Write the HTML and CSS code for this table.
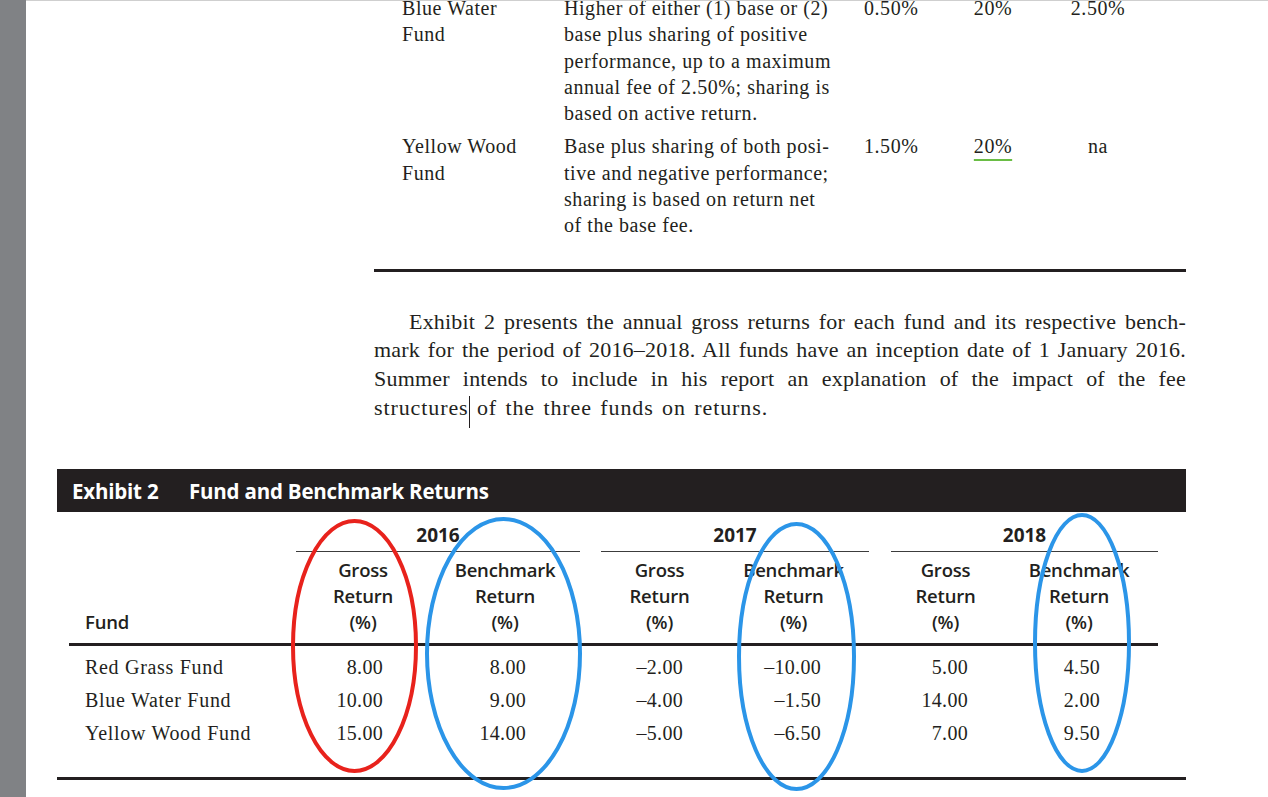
FILE: index.html
```html
<!DOCTYPE html>
<html>
<head>
<meta charset="utf-8">
<title>Fund and Benchmark Returns</title>
<link rel="stylesheet" href="styles.css">
</head>
<body>
<div class="screen">
  <div class="sidebar"></div>
  <div class="page">
    <div class="text-col">
      <div class="fee-table">
        <div class="fee-row">
          <div class="c-fund">Blue Water<br>Fund</div>
          <div class="c-desc">Higher of either (1) base or (2)<br>base plus sharing of positive<br>performance, up to a maximum<br>annual fee of 2.50%; sharing is<br>based on active return.</div>
          <div class="c-base">0.50%</div>
          <div class="c-share">20%</div>
          <div class="c-max">2.50%</div>
        </div>
        <div class="fee-row">
          <div class="c-fund">Yellow Wood<br>Fund</div>
          <div class="c-desc">Base plus sharing of both posi-<br>tive and negative performance;<br>sharing is based on return net<br>of the base fee.</div>
          <div class="c-base">1.50%</div>
          <div class="c-share"><span class="green-ul">20%</span></div>
          <div class="c-max">na</div>
        </div>
      </div>
      <div class="rule"></div>
      <p class="para">
        <span class="ln first">Exhibit 2 presents the annual gross returns for each fund and its respective bench-</span>
        <span class="ln">mark for the period of 2016–2018. All funds have an inception date of 1 January 2016.</span>
        <span class="ln">Summer intends to include in his report an explanation of the impact of the fee</span>
        <span class="ln last">structures<span class="caret"></span> of the three funds on returns.</span>
      </p>
    </div>

    <section class="exhibit">
      <h2 class="exhibit-title"><span class="ex-num">Exhibit 2</span><span>Fund and Benchmark Returns</span></h2>
      <div class="returns">
        <div class="year y16">2016</div>
        <div class="year y17">2017</div>
        <div class="year y18">2018</div>

        <div class="hd hd-fund">Fund</div>
        <div class="hd g16">Gross<br>Return<br>(%)</div>
        <div class="hd b16">Benchmark<br>Return<br>(%)</div>
        <div class="hd g17">Gross<br>Return<br>(%)</div>
        <div class="hd b17">Benchmark<br>Return<br>(%)</div>
        <div class="hd g18">Gross<br>Return<br>(%)</div>
        <div class="hd b18">Benchmark<br>Return<br>(%)</div>

        <div class="thick"></div>

        <div class="cell fund">Red Grass Fund</div>
        <div class="cell g16">8.00</div>
        <div class="cell b16">8.00</div>
        <div class="cell g17">–2.00</div>
        <div class="cell b17">–10.00</div>
        <div class="cell g18">5.00</div>
        <div class="cell b18">4.50</div>

        <div class="cell fund">Blue Water Fund</div>
        <div class="cell g16">10.00</div>
        <div class="cell b16">9.00</div>
        <div class="cell g17">–4.00</div>
        <div class="cell b17">–1.50</div>
        <div class="cell g18">14.00</div>
        <div class="cell b18">2.00</div>

        <div class="cell fund">Yellow Wood Fund</div>
        <div class="cell g16">15.00</div>
        <div class="cell b16">14.00</div>
        <div class="cell g17">–5.00</div>
        <div class="cell b17">–6.50</div>
        <div class="cell g18">7.00</div>
        <div class="cell b18">9.50</div>
      </div>
      <div class="bottom-rule"></div>
    </section>
  </div>

  <svg class="marks" width="1268" height="797" viewBox="0 0 1268 797">
    <ellipse cx="354.5" cy="646" rx="61.5" ry="125" fill="none" stroke="#e8221c" stroke-width="4"/>
    <ellipse cx="503.5" cy="653.5" rx="76.5" ry="134.5" fill="none" stroke="#2b95e8" stroke-width="4"/>
    <ellipse cx="796.5" cy="656.5" rx="57.5" ry="132.5" fill="none" stroke="#2b95e8" stroke-width="4"/>
    <ellipse cx="1082" cy="643" rx="47" ry="128" fill="none" stroke="#2b95e8" stroke-width="4"/>
  </svg>
</div>
</body>
</html>
```

FILE: styles.css
```css
* { box-sizing: border-box; }

html, body {
  margin: 0;
  padding: 0;
}

body {
  background: #ffffff;
  width: 1268px;
  height: 797px;
  overflow: hidden;
  font-family: "Liberation Serif", "Times New Roman", serif;
  color: #231f20;
}

.screen {
  position: relative;
  display: flex;
  width: 1268px;
  height: 797px;
  overflow: hidden;
}

.sidebar {
  flex: none;
  width: 26px;
  background: #808285;
}

.page {
  flex: 1;
  border-top: 1px solid #cfcfcf;
  overflow: hidden;
}

/* ---------- top text column ---------- */
.text-col {
  margin-left: 348px;
  width: 812px;
}

.fee-table {
  margin-top: -6px;
  padding-left: 28px;
  font-size: 20px;
  line-height: 26.3px;
  letter-spacing: 0.55px;
}

.fee-row {
  display: grid;
  grid-template-columns: 162px 300px 80px 98px 112px;
  padding-bottom: 7px;
}

.c-share,
.c-max {
  text-align: center;
}

.green-ul {
  text-decoration: underline;
  text-decoration-color: #6abd45;
  text-decoration-thickness: 2px;
  text-underline-offset: 6px;
}

.rule {
  height: 3px;
  background: #231f20;
  margin-top: 23px;
}

.para {
  margin: 36px 0 0;
  font-size: 22px;
  line-height: 28.7px;
  letter-spacing: 0.2px;
}

.para .ln {
  display: block;
  height: 28.7px;
  white-space: nowrap;
  text-align: justify;
  text-align-last: justify;
}

.para .first {
  text-indent: 35px;
}

.para .last {
  text-align: left;
  text-align-last: left;
  letter-spacing: 0.9px;
  word-spacing: 2px;
}

.caret {
  display: inline-block;
  width: 1px;
  height: 32px;
  background: #231f20;
  vertical-align: top;
  margin-top: 2px;
  margin-bottom: -8px;
  margin-right: -1px;
}

/* ---------- exhibit ---------- */
.exhibit {
  margin: 47px 0 0 31px;
  width: 1129px;
}

.exhibit-title {
  margin: 0;
  height: 43px;
  display: flex;
  align-items: center;
  padding-left: 15px;
  background: #231f20;
  color: #ffffff;
  font-family: "Open Sans", "Liberation Sans", sans-serif;
  font-weight: 700;
  font-size: 20.5px;
  letter-spacing: -0.2px;
}

.ex-num {
  width: 117px;
}

.returns {
  display: grid;
  grid-template-columns: 227px 134px 150px 21px 117px 151px 22px 109px 158px;
  margin: 0 28px 0 12px;
  font-family: "Open Sans", "Liberation Sans", sans-serif;
}

.year {
  grid-row: 1;
  padding: 12px 0 5px;
  line-height: 22px;
  border-bottom: 1px solid #3c3c3c;
  text-align: center;
  font-weight: 700;
  font-size: 19px;
}

.y16 { grid-column: 2 / 4; }
.y17 { grid-column: 5 / 7; }
.y18 { grid-column: 8 / 10; }

.hd {
  grid-row: 2;
  padding: 5px 0 8px;
  line-height: 26px;
  text-align: center;
  font-weight: 600;
  font-size: 18.5px;
  letter-spacing: -0.2px;
}

.hd-fund {
  grid-column: 1;
  text-align: left;
  padding-left: 16px;
  align-self: end;
}

.g16 { grid-column: 2; }
.b16 { grid-column: 3; }
.g17 { grid-column: 5; }
.b17 { grid-column: 6; }
.g18 { grid-column: 8; }
.b18 { grid-column: 9; }

.thick {
  grid-column: 1 / -1;
  height: 3px;
  background: #231f20;
  margin-bottom: 5px;
}

.cell {
  font-family: "Liberation Serif", "Times New Roman", serif;
  font-size: 20px;
  line-height: 33px;
  letter-spacing: 0.3px;
  text-align: right;
}

.cell.fund {
  grid-column: 1;
  text-align: left;
  padding-left: 16px;
  letter-spacing: 0.7px;
}

.cell.g16 { padding-right: 47px; }
.cell.b16 { padding-right: 54px; }
.cell.g17 { padding-right: 35px; }
.cell.b17 { padding-right: 48px; }
.cell.g18 { padding-right: 32px; }
.cell.b18 { padding-right: 58px; }

.bottom-rule {
  height: 3px;
  background: #231f20;
  margin-top: 27px;
}

/* ---------- hand-drawn annotation overlay ---------- */
.marks {
  position: absolute;
  left: 0;
  top: 0;
  pointer-events: none;
}
```
